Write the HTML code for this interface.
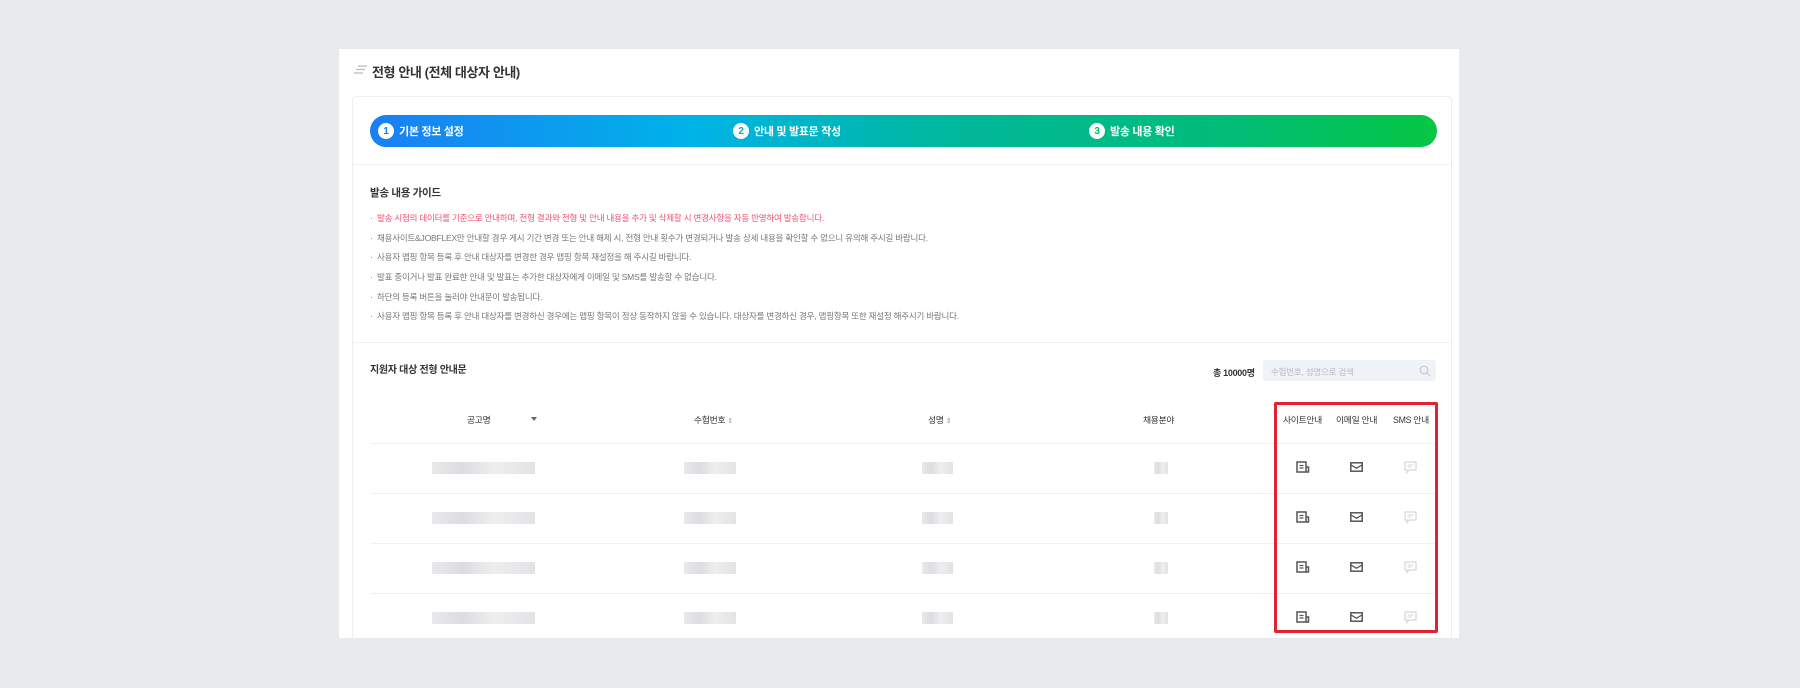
<!DOCTYPE html>
<html><head><meta charset="utf-8"><style>
*{margin:0;padding:0;box-sizing:border-box}
body{width:1800px;height:688px;background:#e8ebee;font-family:"Liberation Sans","Noto Sans CJK KR",sans-serif;position:relative;overflow:hidden;color:#333}
.a{position:absolute;white-space:nowrap}
.card{left:339px;top:49px;width:1120px;height:589px;background:#fff}
.inner{left:352px;top:96px;width:1100px;height:542px;border:1px solid #eceef1;border-bottom:none;border-radius:4px 4px 0 0}
.bar{left:370px;top:115px;width:1067px;height:32px;border-radius:16px;background:linear-gradient(90deg,#1a7ff5 0%,#00b3e8 30%,#00b89a 55%,#00bd78 80%,#06c643 100%)}
.step{color:#fff;font-size:11px;font-weight:bold;top:123px;display:flex;align-items:center;gap:5px;letter-spacing:-0.3px}
.num{width:16px;height:16px;border-radius:50%;background:#fff;color:#1a7ff5;font-size:10px;display:flex;align-items:center;justify-content:center}
.g{font-size:8.5px;color:#777;left:370px;letter-spacing:-0.2px}
.g.r{color:#f0506e}
.hd{font-size:8.8px;color:#333;top:413px;letter-spacing:-0.3px}
.line{height:1px;background:#f0f1f3}
.blk{height:12px;background:linear-gradient(90deg,#e8e9eb,#dcdde0 30%,#eeeeef 60%,#e2e3e5);}
</style></head><body>
<div class="a card"></div>
<svg class="a" style="left:354px;top:65px" width="14" height="9" viewBox="0 0 14 9"><path d="M4 1h9M2 4.5h9M0 8h9" stroke="#bbb" stroke-width="1.3"/></svg>
<div class="a" style="left:372px;top:62px;font-size:13px;font-weight:bold;color:#333;letter-spacing:-0.4px">전형 안내 (전체 대상자 안내)</div>
<div class="a inner"></div>
<div class="a bar"></div>
<div class="a step" style="left:378px"><span class="num">1</span>기본 정보 설정</div>
<div class="a step" style="left:733px"><span class="num" style="color:#00b3a0">2</span>안내 및 발표문 작성</div>
<div class="a step" style="left:1089px"><span class="num" style="color:#00c060">3</span>발송 내용 확인</div>
<div class="a line" style="left:353px;top:164px;width:1098px"></div>
<div class="a" style="left:370px;top:185px;font-size:10.5px;font-weight:bold;letter-spacing:-0.3px">발송 내용 가이드</div>
<div class="a g r" style="top:212px">·&nbsp; 발송 시점의 데이터를 기준으로 안내하며, 전형 결과와 전형 및 안내 내용을 추가 및 삭제할 시 변경사항을 자동 반영하여 발송합니다.</div>
<div class="a g" style="top:232px">·&nbsp; 채용사이트&amp;JOBFLEX만 안내할 경우 게시 기간 변경 또는 안내 해제 시, 전형 안내 횟수가 변경되거나 발송 상세 내용을 확인할 수 없으니 유의해 주시길 바랍니다.</div>
<div class="a g" style="top:251px">·&nbsp; 사용자 맵핑 항목 등록 후 안내 대상자를 변경한 경우 맵핑 항목 재설정을 해 주시길 바랍니다.</div>
<div class="a g" style="top:271px">·&nbsp; 발표 중이거나 발표 완료한 안내 및 발표는 추가한 대상자에게 이메일 및 SMS를 발송할 수 없습니다.</div>
<div class="a g" style="top:291px">·&nbsp; 하단의 등록 버튼을 눌러야 안내문이 발송됩니다.</div>
<div class="a g" style="top:310px">·&nbsp; 사용자 맵핑 항목 등록 후 안내 대상자를 변경하신 경우에는 맵핑 항목이 정상 동작하지 않을 수 있습니다. 대상자를 변경하신 경우, 맵핑항목 또한 재설정 해주시기 바랍니다.</div>
<div class="a line" style="left:353px;top:342px;width:1098px"></div>
<div class="a" style="left:370px;top:361px;font-size:10px;font-weight:bold;letter-spacing:-0.3px">지원자 대상 전형 안내문</div>
<div class="a" style="left:1213px;top:366px;font-size:9px;font-weight:bold;letter-spacing:-0.3px">총 10000명</div>
<div class="a" style="left:1263px;top:360px;width:173px;height:21px;background:#eff2f7;border-radius:3px"></div>
<div class="a" style="left:1271px;top:366px;font-size:8.5px;color:#b5bac3;letter-spacing:-0.2px">수험번호, 성명으로 검색</div>
<svg class="a" style="left:1419px;top:365px" width="12" height="12" viewBox="0 0 12 12"><circle cx="5" cy="5" r="3.8" fill="none" stroke="#c5c9d0" stroke-width="1.2"/><path d="M8 8l3 3" stroke="#c5c9d0" stroke-width="1.2"/></svg>
<div class="a hd" style="left:467px">공고명</div>
<div class="a" style="left:531px;top:417px;width:0;height:0;border-left:3.5px solid transparent;border-right:3.5px solid transparent;border-top:4px solid #666"></div>
<div class="a hd" style="left:694px">수험번호 <span style="color:#999;font-size:7px">⇕</span></div>
<div class="a hd" style="left:928px">성명 <span style="color:#999;font-size:7px">⇕</span></div>
<div class="a hd" style="left:1143px">채용분야</div>
<div class="a hd" style="left:1283px">사이트안내</div>
<div class="a hd" style="left:1336px">이메일 안내</div>
<div class="a hd" style="left:1393px">SMS 안내</div>
<div class="a line" style="left:370px;top:443px;width:1067px"></div>
<div class="a line" style="left:370px;top:493px;width:1067px"></div>
<div class="a line" style="left:370px;top:543px;width:1067px"></div>
<div class="a line" style="left:370px;top:593px;width:1067px"></div>
<div id="rows"></div>
<div class="a" style="left:1274px;top:402px;width:164px;height:231px;border:3px solid #e0232e;border-radius:2px"></div>
<script>
var ys=[462,512,562,612],h='';
ys.forEach(function(y){
h+='<div class="a blk" style="left:432px;top:'+y+'px;width:103px"></div>';
h+='<div class="a blk" style="left:684px;top:'+y+'px;width:52px"></div>';
h+='<div class="a blk" style="left:922px;top:'+y+'px;width:31px"></div>';
h+='<div class="a blk" style="left:1154px;top:'+y+'px;width:14px"></div>';
var c=y+5;
h+='<svg class="a" style="left:1296px;top:'+(c-6)+'px" width="14" height="12" viewBox="0 0 14 12"><rect x="1" y="1" width="9" height="10" fill="none" stroke="#555" stroke-width="1.5"/><path d="M3.5 4.5h4M3.5 7h4" stroke="#555" stroke-width="1.2"/><path d="M10 6h2.5v5H10" fill="none" stroke="#555" stroke-width="1.5"/></svg>';
h+='<svg class="a" style="left:1350px;top:'+(c-5)+'px" width="13" height="10" viewBox="0 0 13 10"><rect x="0.8" y="0.8" width="11.4" height="8.4" fill="none" stroke="#555" stroke-width="1.5"/><path d="M1 3l5.5 3.2L12 3" fill="none" stroke="#555" stroke-width="1.3"/></svg>';
h+='<svg class="a" style="left:1404px;top:'+(c-6)+'px" width="13" height="13" viewBox="0 0 13 13"><path d="M1 1h11v8H5l-2 2.5V9H1z" fill="none" stroke="#d4d6da" stroke-width="1.2"/><path d="M3.5 4h6M3.5 6h4" stroke="#d4d6da" stroke-width="1"/></svg>';
});
document.getElementById('rows').innerHTML=h;
</script>
</body></html>
